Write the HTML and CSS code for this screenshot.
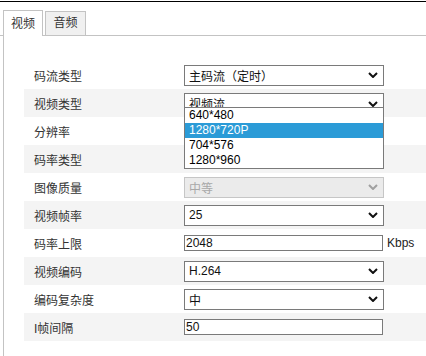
FILE: index.html
```html
<!DOCTYPE html>
<html lang="zh-CN">
<head>
  <meta charset="UTF-8">
  <meta name="viewport" content="width=device-width, initial-scale=1.0">
  <title>视频参数</title>
  <link rel="stylesheet" href="styles.css">
</head>
<body>
  <div class="topline"></div>
  <div class="tabs">
    <div class="tab active">视频</div>
    <div class="tab">音频</div>
  </div>

  <div class="panel">
    <div class="row">
      <span class="label">码流类型</span>
      <div class="select">主码流（定时）<svg class="arrow" viewBox="0 0 10 6"><polyline points="1,1 5,5 9,1"/></svg></div>
    </div>
    <div class="row">
      <span class="label">视频类型</span>
      <div class="select open">视频流<svg class="arrow" viewBox="0 0 10 6"><polyline points="1,1 5,5 9,1"/></svg>
        <ul class="options">
          <li>640*480</li>
          <li class="selected">1280*720P</li>
          <li>704*576</li>
          <li>1280*960</li>
        </ul>
      </div>
    </div>
    <!-- the next two controls sit under the open list -->
    <div class="row">
      <span class="label">分辨率</span>
    </div>
    <div class="row">
      <span class="label">码率类型</span>
    </div>
    <div class="row">
      <span class="label">图像质量</span>
      <div class="select disabled">中等<svg class="arrow" viewBox="0 0 10 6"><polyline points="1,1 5,5 9,1"/></svg></div>
    </div>
    <div class="row">
      <span class="label">视频帧率</span>
      <div class="select">25<svg class="arrow" viewBox="0 0 10 6"><polyline points="1,1 5,5 9,1"/></svg></div>
    </div>
    <div class="row">
      <span class="label">码率上限</span>
      <input class="text" type="text" value="2048">
      <span class="unit">Kbps</span>
    </div>
    <div class="row">
      <span class="label">视频编码</span>
      <div class="select">H.264<svg class="arrow" viewBox="0 0 10 6"><polyline points="1,1 5,5 9,1"/></svg></div>
    </div>
    <div class="row">
      <span class="label">编码复杂度</span>
      <div class="select">中<svg class="arrow" viewBox="0 0 10 6"><polyline points="1,1 5,5 9,1"/></svg></div>
    </div>
    <div class="row">
      <span class="label">I帧间隔</span>
      <input class="text" type="text" value="50">
    </div>
  </div>
</body>
</html>
```

FILE: styles.css
```css
body {
  margin: 0;
  font-family: "Liberation Sans", "Noto Sans CJK SC", sans-serif;
  font-size: 12px;
  color: #222;
  background: #fff;
}
.topline {
  height: 1px;
  margin-top: 1px;
  background: #000;
}
.tabs {
  display: flex;
  align-items: flex-end;
  padding: 8px 0 0 3px;
  border-bottom: 1px solid #c3c3c3;
}
.tab {
  width: 39px;
  height: 23px;
  line-height: 23px;
  text-align: center;
  border: 1px solid #c3c3c3;
  border-bottom: none;
  background: #f0f0f0;
  color: #333;
  margin-left: 2px;
}
.tab.active {
  width: 38px;
  height: 25px;
  line-height: 26px;
  margin-left: 0;
  margin-bottom: -1px;
  background: #fff;
}
.panel {
  margin-left: 3px;
  border-left: 1px solid #c3c3c3;
  padding: 25px 0 15px 20px;
}
.row {
  display: flex;
  align-items: center;
  height: 28px;
  padding-left: 10px;
}
.row:nth-child(even) {
  background: #f4f4f4;
}
.label {
  width: 150px;
  color: #333;
}
.select {
  position: relative;
  box-sizing: border-box;
  width: 200px;
  height: 21px;
  display: flex;
  align-items: center;
  padding-left: 4px;
  border: 1px solid #7a7a7a;
  background: #fff;
  color: #111;
}
.select.open {
  align-self: flex-start;
  margin-top: 4px;
}
.arrow {
  width: 10px;
  height: 6px;
  margin-left: auto;
  margin-right: 5px;
  fill: none;
  stroke: #111;
  stroke-width: 2;
}
.select.disabled {
  background: #ebebeb;
  border-color: #c6c6c6;
  color: #a8a8a8;
}
.select.disabled .arrow {
  stroke: #a0a0a0;
}
.options {
  position: absolute;
  left: -1px;
  top: 13px;
  width: 200px;
  box-sizing: border-box;
  margin: 0;
  padding: 0;
  list-style: none;
  border: 1px solid #7a7a7a;
  background: #fff;
  z-index: 2;
}
.options li {
  height: 15px;
  line-height: 15px;
  padding-left: 4px;
  color: #000;
}
.options li.selected {
  background: #2b9bd7;
  color: #fff;
}
.text {
  box-sizing: border-box;
  width: 199px;
  height: 16px;
  margin: 0;
  padding: 0 1px;
  border: 1px solid #7a7a7a;
  font-family: inherit;
  font-size: 12px;
  color: #111;
  outline: none;
}
.unit {
  margin-left: 4px;
  color: #222;
}
```
